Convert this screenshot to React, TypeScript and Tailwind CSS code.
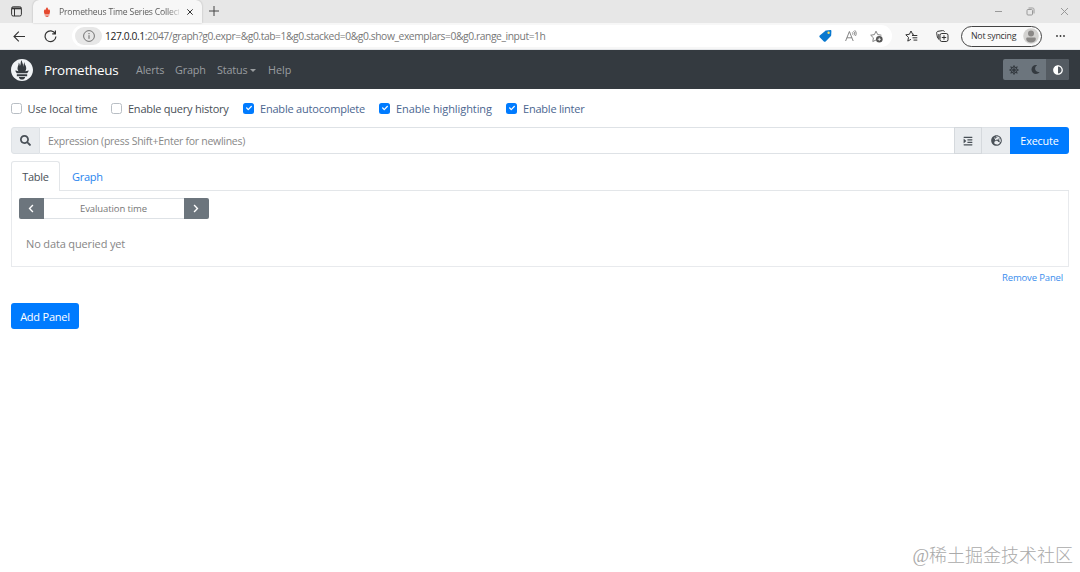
import React from "react";
import {
  FaAdjust,
  FaCheck,
  FaChevronLeft,
  FaChevronRight,
  FaGlobeEurope,
  FaIndent,
  FaMoon,
  FaSearch,
  FaSun,
} from "react-icons/fa";
import { SiPrometheus } from "react-icons/si";

const options = [
  { label: "Use local time", checked: false, box: "w-[100.5px]", text: "tracking-[-0.13px]" },
  { label: "Enable query history", checked: false, box: "w-[132px]", text: "tracking-[-0.24px]" },
  { label: "Enable autocomplete", checked: true, box: "w-[136px]", text: "tracking-[-0.2px]" },
  { label: "Enable highlighting", checked: true, box: "w-[127px]", text: "tracking-[-0.08px]" },
  { label: "Enable linter", checked: true, box: "w-[90px]", text: "tracking-[-0.22px]" },
];

const TabStrip = () => (
  <div className="flex h-[23px] bg-[#e7e7e7] text-[#555]">
    <div className="flex w-[33px] items-center justify-center">
      <svg className="h-[11px] w-[11px]" viewBox="0 0 11 11" fill="none" stroke="#333">
        <rect x="0.6" y="0.8" width="9.8" height="9.2" rx="1.6" />
        <path d="M0.8 2.4h9.4" strokeWidth="1.8" />
        <path d="M3.5 3v7" />
      </svg>
    </div>
    <div className="flex w-[169px] items-center rounded-t-md bg-[#f7f7f7] pl-[10px] shadow-[0_0_2px_rgba(0,0,0,0.25)]">
      <svg className="h-[10px] w-[8px]" viewBox="0 0 8 10" fill="#e5492f">
        <path d="M4 0c.3 1.2 1.6 2 1.8 3.3.3-.2.5-.6.5-1C7 3.500 7.300 4.400 6.800 5.700L6.500 7h-5L1.100 5.700C.7 4.400 1 3.500 1.700 2.300c0 .5.2.8.5 1C2.400 2 3.700 1.200 4 0zM1.500 7.500h5v.7h-5zM2.200 8.700h3.600c-.3.800-1 1.200-1.800 1.200s-1.500-.4-1.800-1.200z" />
      </svg>
      <span className="ml-[8px] w-[120px] whitespace-nowrap bg-gradient-to-r from-[#555] from-90% to-[#55555533] bg-clip-text text-[8.600px] leading-[14px] tracking-[-0.17px] text-transparent">
        Prometheus Time Series Collecti
      </span>
      <svg className="ml-[8px] h-[6px] w-[6px]" viewBox="0 0 6 6" stroke="#333">
        <path d="M.3.3l5.400 5.400M5.700.3L.3 5.700" />
      </svg>
    </div>
    <svg className="ml-[7px] mt-[6px] h-[10px] w-[10px]" viewBox="0 0 10 10" stroke="#444">
      <path d="M5 0v10M0 5h10" />
    </svg>
    <svg className="ml-auto mr-[12px] mt-[7px] h-[9px] w-[74px]" viewBox="0 0 74 9" fill="none" stroke="#999">
      <path d="M1 4.500h7M67 1l7 7M74 1l-7 7" />
      <rect x="33" y="2.500" width="5.500" height="5.500" rx="1" />
      <path d="M34.500 1h4c1 0 1.500.5 1.500 1.500v4" />
    </svg>
  </div>
);

const Toolbar = () => (
  <div className="flex h-[27px] items-center border-b border-[#e3e5e8] bg-[#f7f7f7]">
    <svg className="ml-[13px] h-[11px] w-[12px]" viewBox="0 0 12 11" fill="none" stroke="#333" strokeWidth="1.100">
      <path d="M5.800.7L1 5.500l4.800 4.800M1 5.500h11" />
    </svg>
    <svg className="ml-[19px] h-[13px] w-[13px]" viewBox="0 0 13 13" fill="none" stroke="#333" strokeWidth="1.200">
      <path d="M11.200 3.600A5.400 5.400 0 1 0 11.900 6.500M11.400.6v3.200H8.200" />
    </svg>
    <div className="ml-[15px] flex h-[22px] w-[820px] items-center rounded-full bg-white pl-[3px]">
      <div className="flex h-[18px] w-[27px] items-center justify-center rounded-full bg-[#e7e7e7]">
        <svg className="h-[12px] w-[12px]" viewBox="0 0 12 12" fill="none" stroke="#666">
          <circle cx="6" cy="6" r="5.400" strokeWidth=".9" />
          <path d="M6 5.200v3.600M6 3v1.200" />
        </svg>
      </div>
      <span className="ml-[3px] w-[442px] whitespace-nowrap text-[10.300px] leading-[16px] tracking-[-0.42px] text-[#777]">
        <span className="text-[#222]">127.0.0.1</span>
        :2047/graph?g0.expr=&amp;g0.tab=1&amp;g0.stacked=0&amp;g0.show_exemplars=0&amp;g0.range_input=1h
      </span>
      <svg className="ml-auto h-[12px] w-[13px]" viewBox="0 0 13 12">
        <path d="M7.200.5L11.400 0c.6 0 1 .4 1 1l-.2 4.200c0 .4-.2.7-.5 1L6.600 11.400c-.5.5-1.200.5-1.700 0L.7 7.200c-.5-.5-.5-1.200 0-1.700L6.200.9c.3-.2.6-.4 1-.4z" fill="#0878cf" />
        <circle cx="9.600" cy="2.800" r="1.200" fill="#f4dc62" />
      </svg>
      <svg className="ml-[13px] h-[12px] w-[12px]" viewBox="0 0 12 12" fill="none" stroke="#777" strokeWidth=".9">
        <path d="M.6 11L4.400 1.500 8.200 11M1.900 7.800h5M7.300 2.400c.7.600.7 1.500.3 2.200M8.500 1.200c1.400 1.100 1.400 3 .5 4.200M9.800.3c1.700 1.700 1.700 4 .7 5.600" />
      </svg>
      <svg className="ml-[13px] mr-[9px] h-[13px] w-[13px]" viewBox="0 0 13 13" fill="none" stroke="#777" strokeWidth=".9">
        <path d="M6 10L2.800 11.500l.6-3.700L.7 5.200l3.700-.6L6 1.200l1.700 3.400 3.700.6" />
        <circle cx="9.300" cy="9.300" r="3.300" fill="#555" stroke="none" />
        <path d="M9.300 7.700v3.200M7.700 9.300h3.200" stroke="#fff" strokeWidth=".8" />
      </svg>
    </div>
    <svg className="ml-[13px] h-[12px] w-[13px]" viewBox="0 0 13 12" fill="none" stroke="#333">
      <path d="M6 9.300l-3.200 1.800.7-3.700L.8 4.800l3.600-.5L6 1l1.600 3.200M7 5.500h5.300M7.500 7.800h4.800M8.500 10.100h3.800M7.300 4.300h1.500" />
    </svg>
    <svg className="ml-[18px] h-[13px] w-[13px]" viewBox="0 0 13 13" fill="none" stroke="#333">
      <rect x="4" y="3.500" width="8" height="8" rx="1.800" />
      <path d="M8 5.300v4.400M5.800 7.500h4.400M2.600 8.800C1.800 8.500 1.600 8 1.400 7.200L.7 3.300C.5 2.200 1 1.500 2 1.300L6.500.6c1-.1 1.700.3 2 1.200M2.800 9.500V4" />
    </svg>
    <div className="ml-[12px] flex h-[21px] w-[81px] items-center rounded-full border border-[#444] bg-[#fafafa] pl-[9px]">
      <span className="w-[47px] whitespace-nowrap text-[8.800px] leading-[14px] tracking-[-0.25px] text-[#333]">
        Not syncing
      </span>
      <svg className="ml-[5px] h-[16px] w-[16px]" viewBox="0 0 16 16">
        <circle cx="8" cy="8" r="7.800" fill="#d3d2d0" />
        <circle cx="8" cy="5.400" r="3" fill="#8a8886" />
        <path d="M3.200 11c0-1 .5-1.400 1.400-1.400h6.800c.9 0 1.400.5 1.400 1.400 0 2.200-2 3.600-4.800 3.600S3.200 13.200 3.200 11z" fill="#8a8886" />
      </svg>
    </div>
    <svg className="ml-[14px] h-[2px] w-[9px]" viewBox="0 0 9 2" fill="#333">
      <circle cx="1" cy="1" r=".9" />
      <circle cx="4.500" cy="1" r=".9" />
      <circle cx="8" cy="1" r=".9" />
    </svg>
  </div>
);

const Navbar = () => (
  <nav className="flex h-[39px] items-center bg-[#343a40] text-[10.800px] text-[#9a9da0]">
    <SiPrometheus className="ml-[11px] h-[22px] w-[22px] text-[#f0f3f6]" />
    <span className="ml-[11px] w-[92px] text-[13.400px] tracking-[-0.22px] text-white">Prometheus</span>
    <span className="w-[39px] pt-px tracking-[-0.15px]">Alerts</span>
    <span className="w-[42px] pt-px tracking-[-0.15px]">Graph</span>
    <span className="flex w-[51px] items-center pt-px tracking-[-0.15px]">
      Status
      <span className="ml-[3px] border-x-[3px] border-t-[3px] border-x-transparent border-t-[#9a9da0]" />
    </span>
    <span className="pt-px">Help</span>
    <div className="ml-auto mr-[11px] flex h-[21px] overflow-hidden rounded-[2px] bg-[#6c757d] text-[#343a40]">
      <div className="flex w-[22px] items-center justify-center">
        <FaSun className="h-[10px] w-[10px]" />
      </div>
      <div className="flex w-[21px] items-center justify-center">
        <FaMoon className="h-[9px] w-[9px]" />
      </div>
      <div className="flex w-[23px] items-center justify-center bg-[#545b62]">
        <FaAdjust className="h-[10px] w-[10px] text-white" />
      </div>
    </div>
  </nav>
);

const App = () => {
  return (
    <div className="relative h-[572px] w-[1080px] overflow-hidden bg-white font-['Open_Sans','Noto_Sans',sans-serif] text-[11px] leading-[16px] text-[#495057]">
      <TabStrip />
      <Toolbar />
      <Navbar />

      {/* Query options */}
      <div className="flex h-[38px] items-center pl-[10.500px]">
        {options.map((option) => (
          <label key={option.label} className={`flex items-center whitespace-nowrap ${option.box}`}>
            {option.checked ? (
              <span className="mr-[6px] flex h-[11px] w-[11px] items-center justify-center rounded-[2.500px] bg-[#007bff]">
                <FaCheck className="h-[6px] w-[6px] text-white" />
              </span>
            ) : (
              <span className="mr-[6px] h-[11px] w-[11px] rounded-[2.500px] border border-[#b8bec4]" />
            )}
            <span className={`pt-px ${option.text} ${option.checked ? "text-[#4b6690]" : ""}`}>{option.label}</span>
          </label>
        ))}
      </div>

      {/* Expression input */}
      <div className="ml-[11px] flex h-[27px] w-[1058px]">
        <div className="flex w-[29px] items-center justify-center rounded-l-[3px] border border-[#dee2e6] bg-[#e9ecef]">
          <FaSearch className="h-[11px] w-[11px]" />
        </div>
        <div className="flex flex-1 items-center border-y border-[#dee2e6] pl-[8px] pt-px text-[10.500px] tracking-[-0.27px] text-[#888]">
          Expression (press Shift+Enter for newlines)
        </div>
        <div className="flex w-[28px] items-center justify-center border border-[#d5d9dd] bg-[#e9ecef]">
          <FaIndent className="h-[10px] w-[10px]" />
        </div>
        <div className="flex w-[28px] items-center justify-center border-y border-[#dee2e6] bg-[#e9ecef]">
          <FaGlobeEurope className="h-[11px] w-[11px]" />
        </div>
        <button className="w-[59px] rounded-r-[3px] bg-[#007bff] pt-px text-[10.800px] tracking-[-0.15px] text-white">
          Execute
        </button>
      </div>

      {/* Tabs */}
      <div className="ml-[11px] mt-[7px] flex h-[30px] w-[1058px]">
        <div className="w-[49px] rounded-t-[3px] border border-b-0 border-[#e3e6e9] pt-[7px] text-center tracking-[-0.25px]">
          Table
        </div>
        <div className="flex-1 border-b border-[#e3e6e9] pl-[12px] pt-[8px] tracking-[-0.25px] text-[#2684ee]">
          Graph
        </div>
      </div>
      <div className="ml-[11px] h-[76px] w-[1058px] border border-t-0 border-[#e8eaed] pl-[6.500px] pt-[7px]">
        <div className="flex h-[21px] w-[190px] text-white">
          <div className="flex w-[25px] items-center justify-center rounded-l-[2px] bg-[#6c757d]">
            <FaChevronLeft className="h-[9px] w-[8px]" />
          </div>
          <div className="flex flex-1 items-center justify-center border-y border-[#dee2e6] pt-px text-[9.500px] tracking-[-0.1px] text-[#777]">
            Evaluation time
          </div>
          <div className="flex w-[25px] items-center justify-center rounded-r-[2px] bg-[#6c757d]">
            <FaChevronRight className="h-[9px] w-[8px]" />
          </div>
        </div>
        <p className="ml-[7.500px] mt-[17px] tracking-[-0.14px] text-[#868686]">No data queried yet</p>
      </div>
      <div className="pr-[17px] pt-[3px] text-right text-[9.500px] tracking-[-0.15px] text-[#3b8eed]">Remove Panel</div>
      <button className="ml-[11px] mt-[17px] block h-[26px] w-[68px] rounded-[3px] bg-[#007bff] pt-px tracking-[-0.22px] text-white">
        Add Panel
      </button>

      <div className="absolute right-[7px] top-[544px] whitespace-nowrap font-['Liberation_Serif','Noto_Sans_CJK_SC',serif] text-[18px] font-light leading-[24px] text-[#aaa]">
        @稀土掘金技术社区
      </div>
    </div>
  );
};

export default App;
